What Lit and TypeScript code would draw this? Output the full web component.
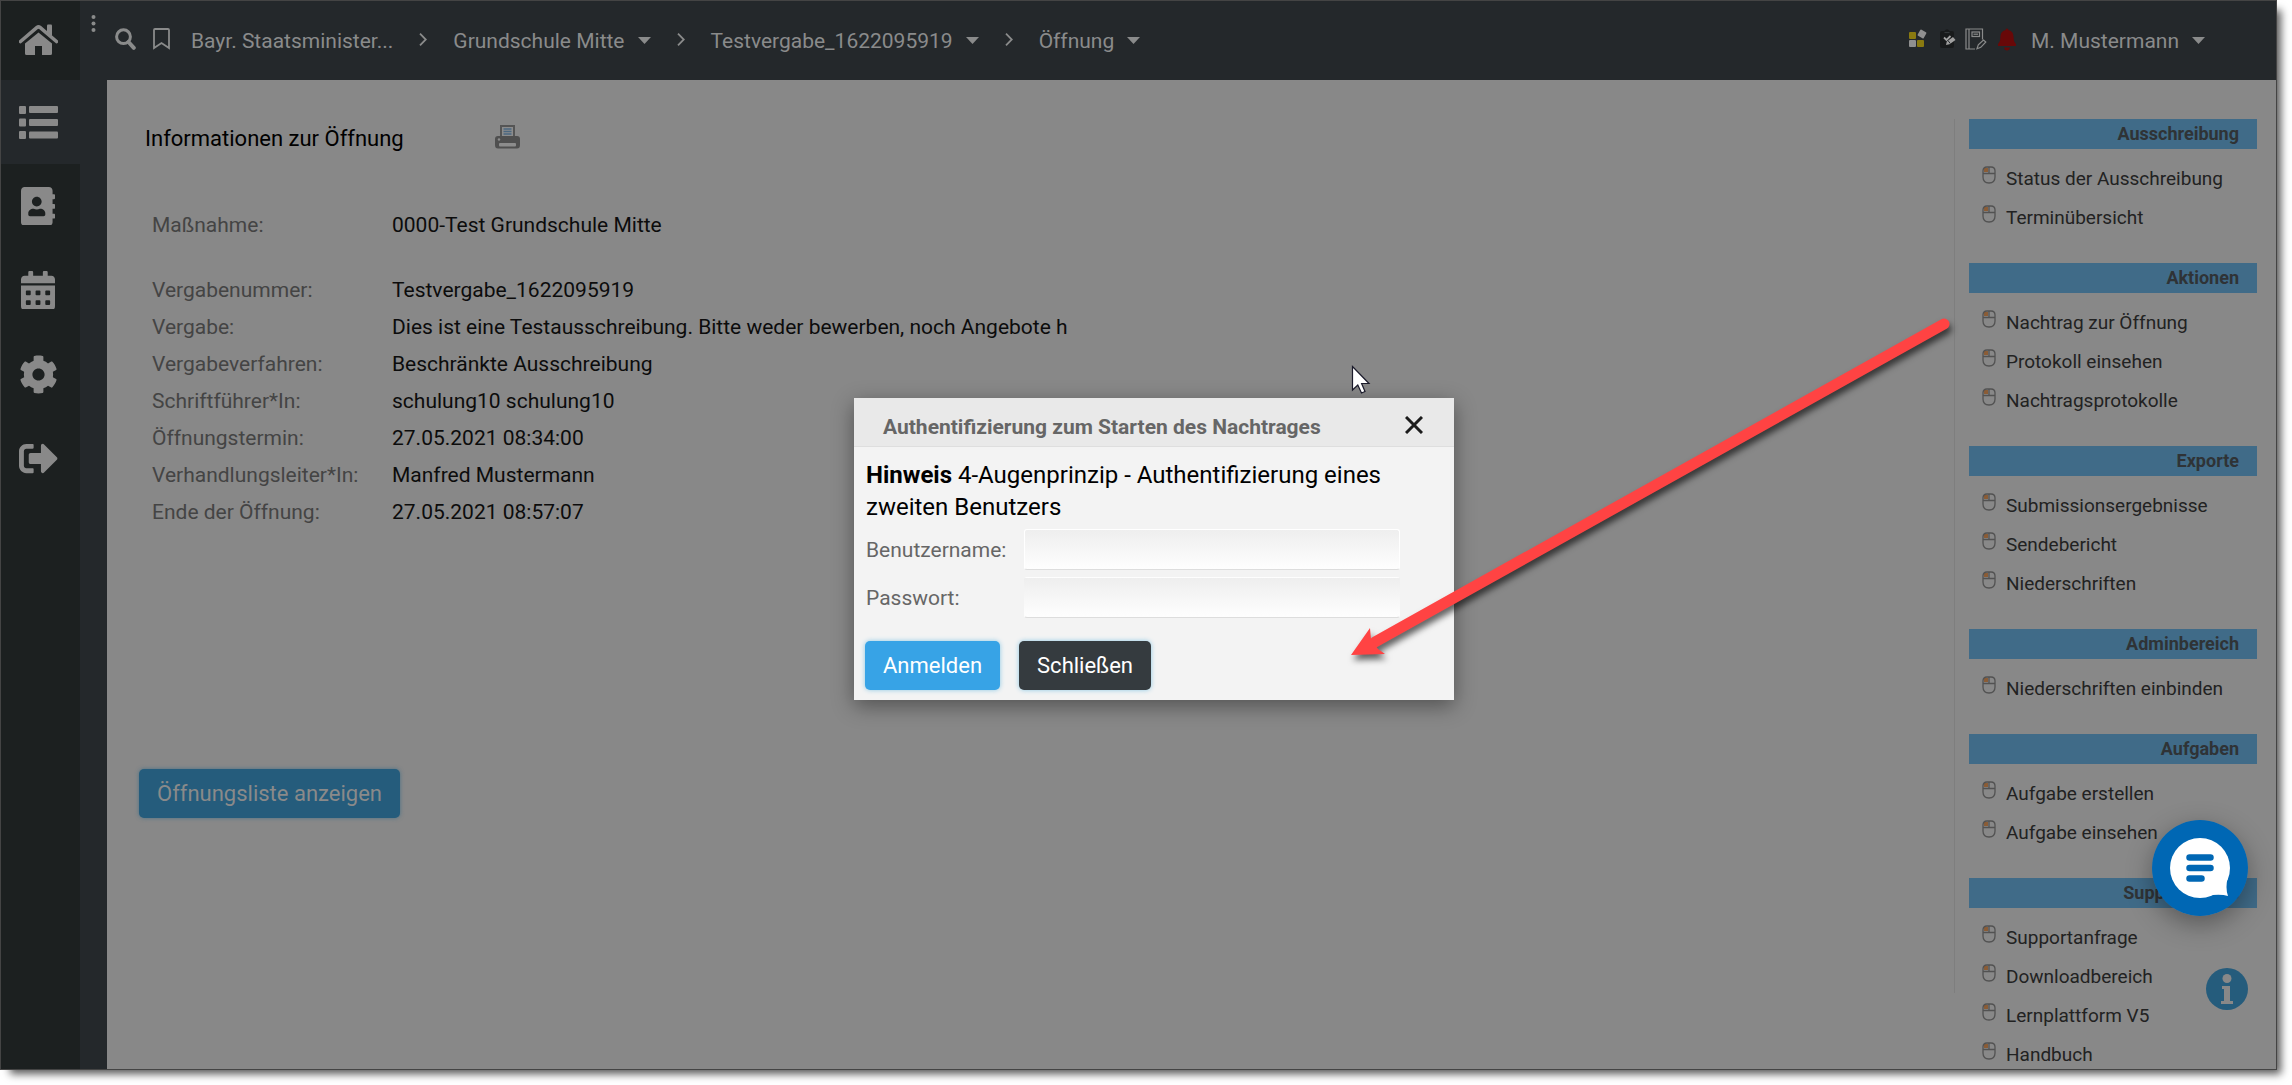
import { LitElement, html, css, svg } from "lit";
import { customElement, property } from "lit/decorators.js";

const railIcons = [
  {
    label: "Startseite",
    box: "0 0 39 31",
    width: 39,
    art: svg`<path d="M19.500 8.500 33 19.500V29.500Q33 31 31.500 31H23V22H16V31H7.500Q6 31 6 29.500V19.500Z"/><path d="M1.500 17.500 18 3.500Q19.500 2.300 21 3.500L37.500 17.500" fill="none" stroke="currentColor" stroke-width="3.600" stroke-linecap="round"/><path d="M28 1.500Q28 .5 29 .5H32Q33 .5 33 1.500V12L28 8Z"/>`,
  },
  {
    label: "Liste",
    box: "0 0 39 33",
    width: 39,
    art: svg`<rect width="7" height="8" rx="1"/><rect x="10" width="29" height="7" rx="1"/><rect y="12.500" width="7" height="8" rx="1"/><rect x="10" y="13" width="29" height="7" rx="1"/><rect y="25" width="7" height="8" rx="1"/><rect x="10" y="25.500" width="29" height="7" rx="1"/>`,
  },
  {
    label: "Adressbuch",
    box: "0 0 448 512",
    width: 34,
    art: svg`<path d="M436 160c6.600 0 12-5.400 12-12v-40c0-6.600-5.400-12-12-12h-20V48c0-26.500-21.500-48-48-48H48C21.500 0 0 21.500 0 48v416c0 26.500 21.500 48 48 48h320c26.500 0 48-21.500 48-48v-48h20c6.600 0 12-5.400 12-12v-40c0-6.600-5.400-12-12-12h-20v-64h20c6.600 0 12-5.400 12-12v-40c0-6.600-5.400-12-12-12h-20v-64h20zm-228-32c35.300 0 64 28.700 64 64s-28.700 64-64 64-64-28.700-64-64 28.700-64 64-64zm112 236.800c0 10.600-10 19.200-22.400 19.200H118.400C106 384 96 375.400 96 364.800v-19.200c0-31.800 30.100-57.600 67.200-57.600h5c12.300 5.100 25.700 8 39.800 8s27.600-2.900 39.800-8h5c37.100 0 67.200 25.800 67.200 57.600v19.200z"/>`,
  },
  {
    label: "Kalender",
    box: "0 0 448 512",
    width: 34,
    art: svg`<path d="M400 64h-48V16c0-8.800-7.200-16-16-16h-32c-8.800 0-16 7.200-16 16v48H160V16c0-8.800-7.200-16-16-16h-32c-8.800 0-16 7.200-16 16v48H48C21.500 64 0 85.500 0 112v48h448v-48c0-26.500-21.500-48-48-48z"/><path fill-rule="evenodd" d="M0 192H448V464a48 48 0 0 1-48 48H48a48 48 0 0 1-48-48ZM76 256a12 12 0 0 0-12 12v40a12 12 0 0 0 12 12h40a12 12 0 0 0 12-12v-40a12 12 0 0 0-12-12ZM204 256a12 12 0 0 0-12 12v40a12 12 0 0 0 12 12h40a12 12 0 0 0 12-12v-40a12 12 0 0 0-12-12ZM332 256a12 12 0 0 0-12 12v40a12 12 0 0 0 12 12h40a12 12 0 0 0 12-12v-40a12 12 0 0 0-12-12ZM76 384a12 12 0 0 0-12 12v40a12 12 0 0 0 12 12h40a12 12 0 0 0 12-12v-40a12 12 0 0 0-12-12ZM204 384a12 12 0 0 0-12 12v40a12 12 0 0 0 12 12h40a12 12 0 0 0 12-12v-40a12 12 0 0 0-12-12ZM332 384a12 12 0 0 0-12 12v40a12 12 0 0 0 12 12h40a12 12 0 0 0 12-12v-40a12 12 0 0 0-12-12Z"/>`,
  },
  {
    label: "Einstellungen",
    box: "0 0 512 512",
    width: 39,
    art: svg`<path d="M487.400 315.700l-42.600-24.600c4.300-23.200 4.300-47 0-70.200l42.600-24.600c4.900-2.800 7.100-8.600 5.500-14-11.100-35.600-30-67.800-54.700-94.600-3.800-4.100-10-5.100-14.800-2.300L380.800 110c-17.900-15.400-38.500-27.300-60.800-35.100V25.800c0-5.600-3.900-10.500-9.400-11.700-36.700-8.200-74.300-7.800-109.200 0-5.500 1.200-9.400 6.100-9.400 11.700V75c-22.200 7.900-42.800 19.800-60.800 35.100L88.700 85.500c-4.900-2.800-11-1.900-14.800 2.300-24.700 26.700-43.600 58.900-54.700 94.600-1.700 5.400.6 11.200 5.500 14L67.300 221c-4.300 23.200-4.300 47 0 70.200l-42.600 24.600c-4.900 2.800-7.100 8.600-5.500 14 11.100 35.600 30 67.800 54.700 94.600 3.800 4.100 10 5.100 14.800 2.300l42.600-24.600c17.900 15.400 38.500 27.300 60.800 35.100v49.200c0 5.600 3.900 10.500 9.400 11.700 36.700 8.200 74.300 7.800 109.200 0 5.500-1.200 9.400-6.100 9.400-11.700v-49.200c22.200-7.900 42.800-19.800 60.800-35.100l42.600 24.600c4.900 2.800 11 1.900 14.800-2.300 24.700-26.700 43.600-58.900 54.700-94.600 1.500-5.500-.7-11.300-5.600-14.100zM256 336c-44.100 0-80-35.900-80-80s35.900-80 80-80 80 35.900 80 80-35.900 80-80 80z"/>`,
  },
  {
    label: "Abmelden",
    box: "0 0 512 512",
    width: 39,
    art: svg`<path d="M497 273L329 441c-15 15-41 4.500-41-17v-96H152c-13.300 0-24-10.700-24-24v-96c0-13.300 10.700-24 24-24h136V88c0-21.400 25.900-32 41-17l168 168c9.300 9.400 9.300 24.600 0 34zM192 436v-40c0-6.600-5.400-12-12-12H96c-17.700 0-32-14.300-32-32V160c0-17.700 14.300-32 32-32h84c6.600 0 12-5.400 12-12V76c0-6.600-5.400-12-12-12H96c-53 0-96 43-96 96v192c0 53 43 96 96 96h84c6.600 0 12-5.400 12-12z"/>`,
  },
];

const facts = [
  [["Maßnahme:", "0000-Test Grundschule Mitte"]],
  [
    ["Vergabenummer:", "Testvergabe_1622095919"],
    ["Vergabe:", "Dies ist eine Testausschreibung. Bitte weder bewerben, noch Angebote h"],
    ["Vergabeverfahren:", "Beschränkte Ausschreibung"],
    ["Schriftführer*In:", "schulung10 schulung10"],
    ["Öffnungstermin:", "27.05.2021 08:34:00"],
    ["Verhandlungsleiter*In:", "Manfred Mustermann"],
    ["Ende der Öffnung:", "27.05.2021 08:57:07"],
  ],
];

const groups: { title: string; links: string[] }[] = [
  { title: "Ausschreibung", links: ["Status der Ausschreibung", "Terminübersicht"] },
  { title: "Aktionen", links: ["Nachtrag zur Öffnung", "Protokoll einsehen", "Nachtragsprotokolle"] },
  { title: "Exporte", links: ["Submissionsergebnisse", "Sendebericht", "Niederschriften"] },
  { title: "Adminbereich", links: ["Niederschriften einbinden"] },
  { title: "Aufgaben", links: ["Aufgabe erstellen", "Aufgabe einsehen"] },
  { title: "Support-Tools", links: ["Supportanfrage", "Downloadbereich", "Lernplattform V5", "Handbuch"] },
];

const reset = css`
  * {
    box-sizing: border-box;
  }
  a {
    color: inherit;
    text-decoration: none;
  }
  button {
    font: inherit;
    color: inherit;
    background: none;
    border: 0;
    padding: 0;
    cursor: pointer;
  }
  svg {
    display: block;
    flex: none;
  }
`;

const caret = html`<svg width="13" height="7" viewBox="0 0 13 7" fill="currentColor" aria-hidden="true"><path d="M0 0H13L6.500 7Z"/></svg>`;
const chevron = html`<svg width="8" height="13" viewBox="0 0 8 13" fill="none" stroke="currentColor" stroke-width="1.800" aria-hidden="true"><path d="M1 .7 6.800 6.500 1 12.300"/></svg>`;

@customElement("side-rail")
export class SideRail extends LitElement {
  static styles = [
    reset,
    css`
      :host {
        display: block;
        background: #1c2020;
        color: #898989;
      }
      .tile {
        display: flex;
        align-items: center;
        justify-content: center;
        height: 84px;
        padding-right: 5px;
      }
      .tile:first-child {
        height: 79px;
        padding-bottom: 3px;
      }
      .active {
        background: #24282b;
      }
    `,
  ];
  render() {
    return html`<nav aria-label="Hauptmenü">
      ${railIcons.map(
        (icon, i) => html`<a class="tile ${i === 1 ? "active" : ""}" href="#" aria-label=${icon.label}>
          <svg width=${icon.width} viewBox=${icon.box} fill="currentColor" aria-hidden="true">${icon.art}</svg>
        </a>`
      )}
    </nav>`;
  }
}

@customElement("top-bar")
export class TopBar extends LitElement {
  static styles = [
    reset,
    css`
      :host {
        display: block;
        color: #8a8b8b;
        font-size: 21px;
      }
      .bar {
        display: flex;
        align-items: center;
        height: 79px;
        padding: 0 71px 0 11px;
      }
      .dots {
        align-self: flex-start;
        margin: 13px 19px 0 0;
      }
      .tools {
        display: flex;
        gap: 17px;
        margin-right: 21px;
        padding-bottom: 3px;
      }
      .trail {
        display: flex;
        align-items: center;
        gap: 26px;
      }
      .crumb {
        display: flex;
        align-items: center;
        gap: 13px;
      }
      .mark {
        padding-bottom: 3px;
      }
      .spacer {
        flex: 1;
      }
      .status {
        display: flex;
        align-items: center;
        gap: 9px;
        margin-right: 14px;
        padding-bottom: 3px;
      }
    `,
  ];
  render() {
    return html`<header class="bar">
      <button class="dots" aria-label="Menü">
        <svg width="5" height="20" viewBox="0 0 5 20" fill="currentColor"><circle cx="2.500" cy="3" r="2"/><circle cx="2.500" cy="9.500" r="2"/><circle cx="2.500" cy="16" r="2"/></svg>
      </button>
      <div class="tools">
        <button aria-label="Suche">
          <svg width="21" height="22" viewBox="0 0 21 22" fill="none" stroke="currentColor"><circle cx="8.500" cy="8.700" r="6.900" stroke-width="3"/><path d="m13.500 14 5.300 5.800" stroke-width="4" stroke-linecap="round"/></svg>
        </button>
        <button aria-label="Lesezeichen">
          <svg width="17" height="22" viewBox="0 0 17 22" fill="none" stroke="currentColor" stroke-width="1.800"><path d="M1 2Q1 1 2 1H15Q16 1 16 2V20L8.500 15 1 20Z"/></svg>
        </button>
      </div>
      <nav class="trail" aria-label="Pfad">
        <a class="crumb" href="#">Bayr. Staatsminister...</a>
        <span class="mark">${chevron}</span>
        <a class="crumb" href="#">Grundschule Mitte ${caret}</a>
        <span class="mark">${chevron}</span>
        <a class="crumb" href="#">Testvergabe_1622095919 ${caret}</a>
        <span class="mark">${chevron}</span>
        <a class="crumb" href="#">Öffnung ${caret}</a>
      </nav>
      <span class="spacer"></span>
      <div class="status">
        <svg width="22" height="20" viewBox="0 0 22 20" aria-hidden="true"><rect x="1" y="3" width="7" height="7" rx="1" fill="#8a7a10"/><rect x="1" y="11" width="7" height="7" rx="1" fill="#909090"/><rect x="9" y="11" width="7" height="7" rx="1" fill="#8a7a10"/><rect x="10.500" y="1.500" width="7" height="7" rx="1" fill="#909090" transform="rotate(30 14 5)"/></svg>
        <svg width="17" height="22" viewBox="0 0 17 22" aria-hidden="true"><path d="M3 3H5.500Q8 -.5 10.500 3H13Q15 3 15 5V18Q15 20 13 20H3Q1 20 1 18V5Q1 3 3 3Z" fill="#181a1b"/><path d="M5.500 4.500H10.500" stroke="#34383a" stroke-width="1.200"/><path d="m5 9.500 2.500 2.500L11.500 8" fill="none" stroke="#a0a0a0" stroke-width="1.800"/><path d="m7 17 .8-3.500L14 9l2.500 3L10.500 16.300Z" fill="#a0a0a0"/><path d="m9 12.500 2.200 3" stroke="#24282b" stroke-width="1"/></svg>
        <svg width="23" height="22" viewBox="0 0 23 22" fill="none" stroke="#8a8b8b" stroke-width="1.200" aria-hidden="true"><path d="M10 21H1V1H17.500V11.500M4 1V21"/><rect x="7" y="4" width="7.500" height="4.500"/><path d="M8.500 6.200H13"/><path d="m12 20.800 1.300-4 5.200-4.800 2.300 2-5 5.300Z"/></svg>
        <svg width="20" height="23" viewBox="0 0 20 23" fill="#680808" aria-hidden="true"><path d="M10 .5Q11.500.5 11.500 2.300C15.500 3 16.500 6 16.600 9.500 16.700 13.500 18 14.500 19 16V18H1V16C2 14.500 3.300 13.500 3.400 9.500 3.500 6 4.500 3 8.500 2.300Q8.500.5 10 .5ZM7 19.500H13Q12.500 22.500 10 22.500 7.500 22.500 7 19.500Z"/></svg>
      </div>
      <a class="crumb" href="#">M. Mustermann ${caret}</a>
    </header>`;
  }
}

@customElement("opening-info")
export class OpeningInfo extends LitElement {
  static styles = [
    reset,
    css`
      :host {
        display: block;
        color: #0c0c0c;
        font-size: 21px;
      }
      .view {
        padding: 43px 0 0 32px;
      }
      .head {
        display: flex;
        align-items: center;
        gap: 91px;
        margin-left: 6px;
      }
      .title {
        margin: 0;
        color: #000;
        font-size: 22px;
        font-weight: 400;
        line-height: 32px;
      }
      .print {
        padding-bottom: 4px;
      }
      .facts {
        display: grid;
        gap: 28px;
        margin: 52px 0 0 13px;
      }
      .block {
        margin: 0;
      }
      .row {
        display: grid;
        grid-template-columns: 240px 1fr;
        line-height: 37px;
      }
      dt {
        color: #444;
      }
      dd {
        margin: 0;
      }
      .show {
        height: 49px;
        margin-top: 238px;
        padding: 0 18px;
        border-radius: 5px;
        background: #255c7c;
        box-shadow: 0 0 4px #4a7186;
        color: #8a8a8a;
        font-size: 22px;
      }
    `,
  ];
  render() {
    return html`<main class="view">
      <div class="head">
        <h1 class="title">Informationen zur Öffnung</h1>
        <button class="print" aria-label="Drucken">
          <svg width="25" height="24" viewBox="0 0 25 24"><path d="M5 0H20V12H5Z" fill="#555"/><path d="M7 2H18V12H7Z" fill="#8c8c8c"/><path d="M8.500 4H16.500M8.500 6.500H16.500M8.500 9H16.500" stroke="#4b6780" stroke-width="1.700"/><path d="M3 11H22Q25 11 25 14V20Q25 23.500 22 23.500H3Q0 23.500 0 20V14Q0 11 3 11Z" fill="#4f4f4f"/><rect x="4" y="18" width="17" height="3.500" rx="1" fill="#8c8c8c"/><circle cx="4" cy="14.500" r="1.200" fill="#8c8c8c"/></svg>
        </button>
      </div>
      <div class="facts">
        ${facts.map(
          (block) => html`<dl class="block">
            ${block.map(([k, v]) => html`<div class="row"><dt>${k}</dt><dd>${v}</dd></div>`)}
          </dl>`
        )}
      </div>
      <button class="show">Öffnungsliste anzeigen</button>
    </main>`;
  }
}

@customElement("link-panel")
export class LinkPanel extends LitElement {
  static styles = [
    reset,
    css`
      :host {
        display: block;
        padding: 39px 19px 0 0;
      }
      .panel {
        display: flex;
      }
      .rule {
        width: 1px;
        height: 874px;
        margin-right: 14px;
        background: #7e7e7e;
      }
      .groups {
        flex: 1;
      }
      .title {
        margin: 0;
        padding-right: 18px;
        background: #406b88;
        color: #2f3336;
        font-size: 18px;
        font-weight: 700;
        line-height: 30px;
        text-align: right;
      }
      .links {
        margin: 0;
        padding: 10px 0 26px 13px;
        list-style: none;
      }
      .link {
        display: flex;
        align-items: center;
        gap: 10px;
        color: #222;
        font-size: 19px;
        line-height: 39px;
      }
      .mouse {
        margin-bottom: 7px;
      }
    `,
  ];
  render() {
    return html`<aside class="panel">
      <div class="rule"></div>
      <div class="groups">
        ${groups.map(
          (g) => html`<section>
            <h2 class="title">${g.title}</h2>
            <ul class="links">
              ${g.links.map(
                (l) => html`<li><a class="link" href="#">
                  <svg class="mouse" width="14" height="18" viewBox="0 0 14 18" fill="none" stroke="#525252" stroke-width="1.300" aria-hidden="true"><rect x="2" y="2" width="4" height="4" fill="#8a5c36" stroke="none"/><path d="M1 5Q1 1 5 1H9Q13 1 13 5V11Q13 17 7 17T1 11ZM1 7.500H13M7 1V7.500"/></svg>
                  ${l}</a></li>`
              )}
            </ul>
          </section>`
        )}
      </div>
    </aside>`;
  }
}

@customElement("auth-dialog")
export class AuthDialog extends LitElement {
  @property() heading = "";
  static styles = [
    reset,
    css`
      :host {
        display: block;
      }
      .dialog {
        background: #f3f3f3;
        color: #000;
        box-shadow: 0 6px 20px rgba(0, 0, 0, 0.4);
      }
      .head {
        display: flex;
        align-items: center;
        justify-content: space-between;
        height: 49px;
        padding: 10px 31px 0 29px;
        border-bottom: 1px solid #dedede;
        background: #e9e9e9;
      }
      .title {
        margin: 0;
        color: #666;
        font-size: 21px;
        font-weight: 700;
      }
      .close {
        margin-bottom: 5px;
      }
      .body {
        padding: 12px 12px 10px;
      }
      .hint {
        margin: 0 0 6px;
        font-size: 24px;
        line-height: 32px;
      }
      .field {
        display: grid;
        grid-template-columns: 158px 376px;
        align-items: center;
        margin-bottom: 7px;
        color: #666;
        font-size: 21px;
      }
      .input {
        width: 100%;
        height: 41px;
        padding: 0 8px;
        border: 1px solid #fff;
        border-bottom-color: #ddd;
        border-radius: 3px;
        background: linear-gradient(#eeeeee, #fefefe);
        font: inherit;
        outline: none;
      }
      .secret {
        border-color: transparent transparent #ddd;
      }
      .actions {
        display: flex;
        gap: 19px;
        margin: 23px 0 0 -1px;
      }
      .action {
        height: 49px;
        padding: 0 18px;
        border-radius: 5px;
        background: #37a3e6;
        box-shadow: 0 0 5px #8cc8e4;
        color: #fff;
        font-size: 22px;
      }
      .dark {
        background: #353b3f;
      }
    `,
  ];
  render() {
    return html`<form class="dialog" role="dialog" aria-labelledby="title" @submit=${(e: Event) => e.preventDefault()}>
      <div class="head">
        <h2 class="title" id="title">${this.heading}</h2>
        <button class="close" type="button" aria-label="Dialog schließen">
          <svg width="18" height="18" viewBox="0 0 18 18" fill="none" stroke="#1c1c1c" stroke-width="3"><path d="M1 1 17 17M17 1 1 17"/></svg>
        </button>
      </div>
      <div class="body">
        <p class="hint"><b>Hinweis</b> 4-Augenprinzip - Authentifizierung eines zweiten Benutzers</p>
        <div class="field">
          <label for="user">Benutzername:</label>
          <input class="input" id="user" type="text" autocomplete="off" />
        </div>
        <div class="field">
          <label for="pass">Passwort:</label>
          <input class="input secret" id="pass" type="password" autocomplete="off" />
        </div>
        <div class="actions">
          <button class="action" type="submit">Anmelden</button>
          <button class="action dark" type="button">Schließen</button>
        </div>
      </div>
    </form>`;
  }
}

@customElement("app-root")
export class AppRoot extends LitElement {
  static styles = [
    reset,
    css`
      :host {
        display: block;
        box-sizing: border-box;
        height: 100vh;
        padding: 0 15px 15px 0;
        overflow: hidden;
        background: #fff;
        font-family: Roboto, "Liberation Sans", sans-serif;
      }
      .window {
        position: relative;
        height: 100%;
        border: 1px solid #444;
        background: #24282b;
        box-shadow: 7px 7px 8px -3px rgba(0, 0, 0, 0.65);
      }
      .frame {
        display: grid;
        grid-template-columns: 79px 27px minmax(0, 1fr);
        grid-template-rows: 79px minmax(0, 1fr);
        height: 100%;
        overflow: hidden;
      }
      .rail {
        grid-row: 1 / 3;
      }
      .top {
        grid-column: 2 / 4;
      }
      .page {
        display: grid;
        grid-column: 3;
        grid-template-columns: minmax(0, 1fr) 322px;
        overflow: hidden;
        background: #888;
      }
      .layer {
        position: absolute;
        inset: 0;
        display: flex;
        align-items: flex-start;
        justify-content: center;
        padding: 397px 0 0 31px;
      }
      .dialog {
        width: 600px;
      }
      .chat {
        position: absolute;
        right: 28px;
        bottom: 153px;
        border-radius: 50%;
        box-shadow: 0 8px 26px rgba(0, 0, 0, 0.35);
      }
      .info {
        position: absolute;
        right: 28px;
        bottom: 59px;
      }
      .pointer {
        position: absolute;
        left: 1350px;
        top: 364px;
      }
      .arrow {
        position: absolute;
        left: 1340px;
        top: 310px;
        filter: drop-shadow(2px 5px 3px rgba(0, 0, 0, 0.6));
        pointer-events: none;
      }
    `,
  ];
  render() {
    return html`<div class="window">
      <div class="frame">
        <side-rail class="rail"></side-rail>
        <top-bar class="top"></top-bar>
        <div class="page">
          <opening-info></opening-info>
          <link-panel></link-panel>
        </div>
      </div>
      <button class="info" aria-label="Information">
        <svg width="42" height="42" viewBox="0 0 42 42"><circle cx="21" cy="21" r="21" fill="#255c7c"/><g fill="#888"><circle cx="21" cy="10.500" r="4.500"/><path d="M16 18H24V33H27V36H15V33H18V21H16Z"/></g></svg>
      </button>
      <div class="layer">
        <auth-dialog class="dialog" heading="Authentifizierung zum Starten des Nachtrages"></auth-dialog>
      </div>
      <button class="chat" aria-label="Chat öffnen">
        <svg width="96" height="96" viewBox="0 0 96 96"><circle cx="48" cy="48" r="48" fill="#0067b4"/><path d="M48 18A30 30 0 1 1 48 78 30 30 0 1 1 48 18Z" fill="#fff"/><path d="M60 75Q70 74 76 76Q73 68 76 56Z" fill="#fff"/><path d="M37.500 37.500H58.500M37.500 48H58.500M37.500 58.500H49.500" stroke="#0067b4" stroke-width="6.500" stroke-linecap="round"/></svg>
      </button>
      <svg class="pointer" width="20" height="30" viewBox="0 0 20 30" fill="#fff" stroke="#1a1a2a" stroke-width="1.200" aria-hidden="true"><path d="M1.500 1.500V25L6.800 20 10.500 28 14 26.500 10.600 18.500H18Z"/></svg>
      <svg class="arrow" width="620" height="360" viewBox="0 0 620 360" aria-hidden="true"><path d="M34 331 603 13" stroke="#ff4343" stroke-width="11" stroke-linecap="round"/><path d="M10 344 29 317 30 328 37 338 44 343Z" fill="#ff4343"/></svg>
    </div>`;
  }
}
